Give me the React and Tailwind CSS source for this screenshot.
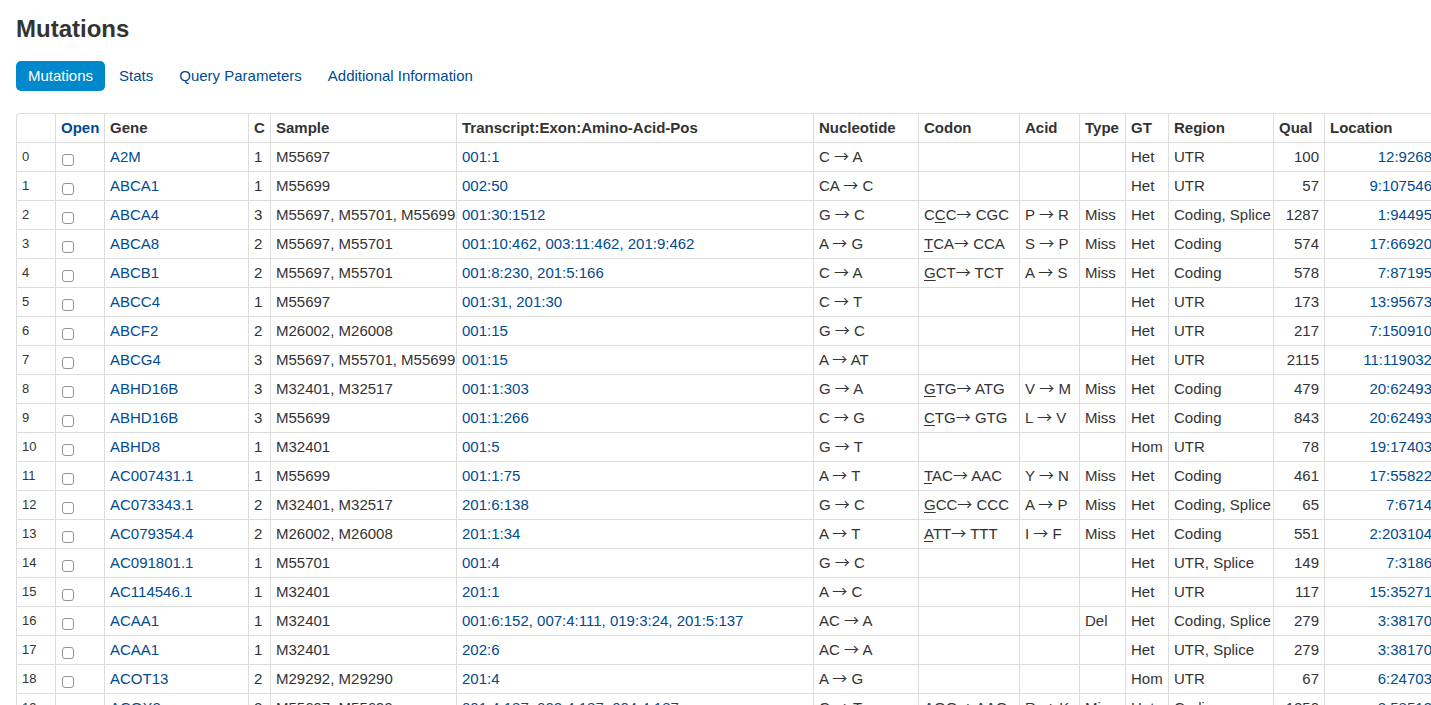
import React, { useState } from 'react';
import clsx from 'clsx';

const tabs = ['Mutations', 'Stats', 'Query Parameters', 'Additional Information'];

const columns = [
    { label: '', width: 'w-[39px]' },
    { label: 'Open', width: 'w-[49px]', link: true },
    { label: 'Gene', width: 'w-36' },
    { label: 'C', width: 'w-[22px]' },
    { label: 'Sample', width: 'w-[186px]' },
    { label: 'Transcript:Exon:Amino-Acid-Pos', width: 'w-[357px]' },
    { label: 'Nucleotide', width: 'w-[105px]' },
    { label: 'Codon', width: 'w-[101px]' },
    { label: 'Acid', width: 'w-[60px]' },
    { label: 'Type', width: 'w-[46px]' },
    { label: 'GT', width: 'w-[43px]' },
    { label: 'Region', width: 'w-[105px]' },
    { label: 'Qual', width: 'w-[51px]' },
    { label: 'Location', width: 'w-[138px]' },
];

// codon: [before, changed base, after, new codon]
const rows = [
    { gene: 'A2M', count: 1, sample: 'M55697', transcripts: ['001:1'], nuc: ['C', 'A'], gt: 'Het', region: 'UTR', qual: 100, loc: '12:9268745' },
    { gene: 'ABCA1', count: 1, sample: 'M55699', transcripts: ['002:50'], nuc: ['CA', 'C'], gt: 'Het', region: 'UTR', qual: 57, loc: '9:107546263' },
    { gene: 'ABCA4', count: 3, sample: 'M55697, M55701, M55699', transcripts: ['001:30:1512'], nuc: ['G', 'C'], codon: ['C', 'C', 'C', 'CGC'], acid: ['P', 'R'], type: 'Miss', gt: 'Het', region: 'Coding, Splice', qual: 1287, loc: '1:94495083' },
    { gene: 'ABCA8', count: 2, sample: 'M55697, M55701', transcripts: ['001:10:462', '003:11:462', '201:9:462'], nuc: ['A', 'G'], codon: ['', 'T', 'CA', 'CCA'], acid: ['S', 'P'], type: 'Miss', gt: 'Het', region: 'Coding', qual: 574, loc: '17:66920934' },
    { gene: 'ABCB1', count: 2, sample: 'M55697, M55701', transcripts: ['001:8:230', '201:5:166'], nuc: ['C', 'A'], codon: ['', 'G', 'CT', 'TCT'], acid: ['A', 'S'], type: 'Miss', gt: 'Het', region: 'Coding', qual: 578, loc: '7:87195421' },
    { gene: 'ABCC4', count: 1, sample: 'M55697', transcripts: ['001:31', '201:30'], nuc: ['C', 'T'], gt: 'Het', region: 'UTR', qual: 173, loc: '13:95673791' },
    { gene: 'ABCF2', count: 2, sample: 'M26002, M26008', transcripts: ['001:15'], nuc: ['G', 'C'], gt: 'Het', region: 'UTR', qual: 217, loc: '7:150910917' },
    { gene: 'ABCG4', count: 3, sample: 'M55697, M55701, M55699', transcripts: ['001:15'], nuc: ['A', 'AT'], gt: 'Het', region: 'UTR', qual: 2115, loc: '11:119032953' },
    { gene: 'ABHD16B', count: 3, sample: 'M32401, M32517', transcripts: ['001:1:303'], nuc: ['G', 'A'], codon: ['', 'G', 'TG', 'ATG'], acid: ['V', 'M'], type: 'Miss', gt: 'Het', region: 'Coding', qual: 479, loc: '20:62493800' },
    { gene: 'ABHD16B', count: 3, sample: 'M55699', transcripts: ['001:1:266'], nuc: ['C', 'G'], codon: ['', 'C', 'TG', 'GTG'], acid: ['L', 'V'], type: 'Miss', gt: 'Het', region: 'Coding', qual: 843, loc: '20:62493089' },
    { gene: 'ABHD8', count: 1, sample: 'M32401', transcripts: ['001:5'], nuc: ['G', 'T'], gt: 'Hom', region: 'UTR', qual: 78, loc: '19:17403021' },
    { gene: 'AC007431.1', count: 1, sample: 'M55699', transcripts: ['001:1:75'], nuc: ['A', 'T'], codon: ['', 'T', 'AC', 'AAC'], acid: ['Y', 'N'], type: 'Miss', gt: 'Het', region: 'Coding', qual: 461, loc: '17:55822416' },
    { gene: 'AC073343.1', count: 2, sample: 'M32401, M32517', transcripts: ['201:6:138'], nuc: ['G', 'C'], codon: ['', 'G', 'CC', 'CCC'], acid: ['A', 'P'], type: 'Miss', gt: 'Het', region: 'Coding, Splice', qual: 65, loc: '7:6714427' },
    { gene: 'AC079354.4', count: 2, sample: 'M26002, M26008', transcripts: ['201:1:34'], nuc: ['A', 'T'], codon: ['', 'A', 'TT', 'TTT'], acid: ['I', 'F'], type: 'Miss', gt: 'Het', region: 'Coding', qual: 551, loc: '2:203104318' },
    { gene: 'AC091801.1', count: 1, sample: 'M55701', transcripts: ['001:4'], nuc: ['G', 'C'], gt: 'Het', region: 'UTR, Splice', qual: 149, loc: '7:3186052' },
    { gene: 'AC114546.1', count: 1, sample: 'M32401', transcripts: ['201:1'], nuc: ['A', 'C'], gt: 'Het', region: 'UTR', qual: 117, loc: '15:35271264' },
    { gene: 'ACAA1', count: 1, sample: 'M32401', transcripts: ['001:6:152', '007:4:111', '019:3:24', '201:5:137'], nuc: ['AC', 'A'], type: 'Del', gt: 'Het', region: 'Coding, Splice', qual: 279, loc: '3:38170478' },
    { gene: 'ACAA1', count: 1, sample: 'M32401', transcripts: ['202:6'], nuc: ['AC', 'A'], gt: 'Het', region: 'UTR, Splice', qual: 279, loc: '3:38170478' },
    { gene: 'ACOT13', count: 2, sample: 'M29292, M29290', transcripts: ['201:4'], nuc: ['A', 'G'], gt: 'Hom', region: 'UTR', qual: 67, loc: '6:24703412' },
    { gene: 'ACOX2', count: 2, sample: 'M55697, M55699', transcripts: ['001:4:187', '002:4:187', '004:4:187'], nuc: ['C', 'T'], codon: ['A', 'G', 'G', 'AAG'], acid: ['R', 'K'], type: 'Miss', gt: 'Het', region: 'Coding', qual: 1250, loc: '3:58519218' },
];

const Cell = ({ className, children }) => (
    <td className={clsx('h-[29px] border-t border-l border-[#dddddd] px-[5px] pt-0 pb-px', className)}>{children}</td>
);

const Link = ({ children }) => (
    <a href="#" className="text-[#004b91] hover:underline">{children}</a>
);

// Full-width arrow with an open head
const Arrow = () => <span className="font-['Noto_Sans_CJK_SC',sans-serif] leading-none">→</span>;

const Change = ({ pair }) => (
    <>{pair[0]} <Arrow /> {pair[1]}</>
);

const Codon = ({ parts }) => {
    const [before, changed, after, result] = parts;
    return (
        <>
            {before}<u className="underline-offset-2">{changed}</u>{after}<Arrow /> {result}
        </>
    );
};

const MutationRow = ({ index, row, checked, onToggle }) => (
    <tr>
        <Cell className="text-[13px]">{index}</Cell>
        <Cell>
            <input
                type="checkbox"
                aria-label={`Open ${row.gene}`}
                checked={checked}
                onChange={onToggle}
                className="mt-[7px] ml-px block size-3 appearance-none rounded-[3px] border border-[#969390] bg-white checked:bg-[#0088cc]"
            />
        </Cell>
        <Cell><Link>{row.gene}</Link></Cell>
        <Cell>{row.count}</Cell>
        <Cell>{row.sample}</Cell>
        <Cell>
            {row.transcripts.map((t, i) => (
                <React.Fragment key={t}>
                    <Link>{t}{i < row.transcripts.length - 1 ? ',' : ''}</Link>{' '}
                </React.Fragment>
            ))}
        </Cell>
        <Cell><Change pair={row.nuc} /></Cell>
        <Cell>{row.codon && <Codon parts={row.codon} />}</Cell>
        <Cell>{row.acid && <Change pair={row.acid} />}</Cell>
        <Cell>{row.type}</Cell>
        <Cell>{row.gt}</Cell>
        <Cell>{row.region}</Cell>
        <Cell className="text-right">{row.qual}</Cell>
        <Cell className="text-right"><Link>{row.loc}</Link></Cell>
    </tr>
);

export default function App() {
    const [activeTab, setActiveTab] = useState('Mutations');
    const [opened, setOpened] = useState([]);

    const toggle = (index) => {
        setOpened(opened.includes(index) ? opened.filter(i => i !== index) : [...opened, index]);
    };

    return (
        <div className="h-screen overflow-hidden bg-white pt-[11px] pl-4 font-['Liberation_Sans',Arial,sans-serif] text-[15px] leading-5 text-[#333333]">
            <h1 className="text-2xl leading-9 font-bold">Mutations</h1>

            <nav className="mt-[14px] flex gap-0.5">
                {tabs.map(tab => (
                    <button
                        key={tab}
                        type="button"
                        onClick={() => setActiveTab(tab)}
                        className={clsx(
                            'h-[30px] rounded-[5px] px-3',
                            tab === activeTab ? 'bg-[#0088cc] text-white' : 'text-[#004b91] hover:bg-gray-100'
                        )}
                    >
                        {tab}
                    </button>
                ))}
            </nav>

            <table className="mt-[22px] w-[1446px] table-fixed border-separate border-spacing-0 rounded-tl-[4px] whitespace-nowrap">
                <thead>
                    <tr>
                        {columns.map((col, i) => (
                            <th
                                key={col.label}
                                className={clsx(
                                    'h-[29px] border-t border-l border-[#dddddd] px-[5px] pt-0 pb-px text-left font-bold',
                                    i === 0 && 'rounded-tl-[4px]',
                                    col.width
                                )}
                            >
                                {col.link ? <Link>{col.label}</Link> : col.label}
                            </th>
                        ))}
                    </tr>
                </thead>
                <tbody>
                    {rows.map((row, i) => (
                        <MutationRow
                            key={i}
                            index={i}
                            row={row}
                            checked={opened.includes(i)}
                            onToggle={() => toggle(i)}
                        />
                    ))}
                </tbody>
            </table>
        </div>
    );
}
